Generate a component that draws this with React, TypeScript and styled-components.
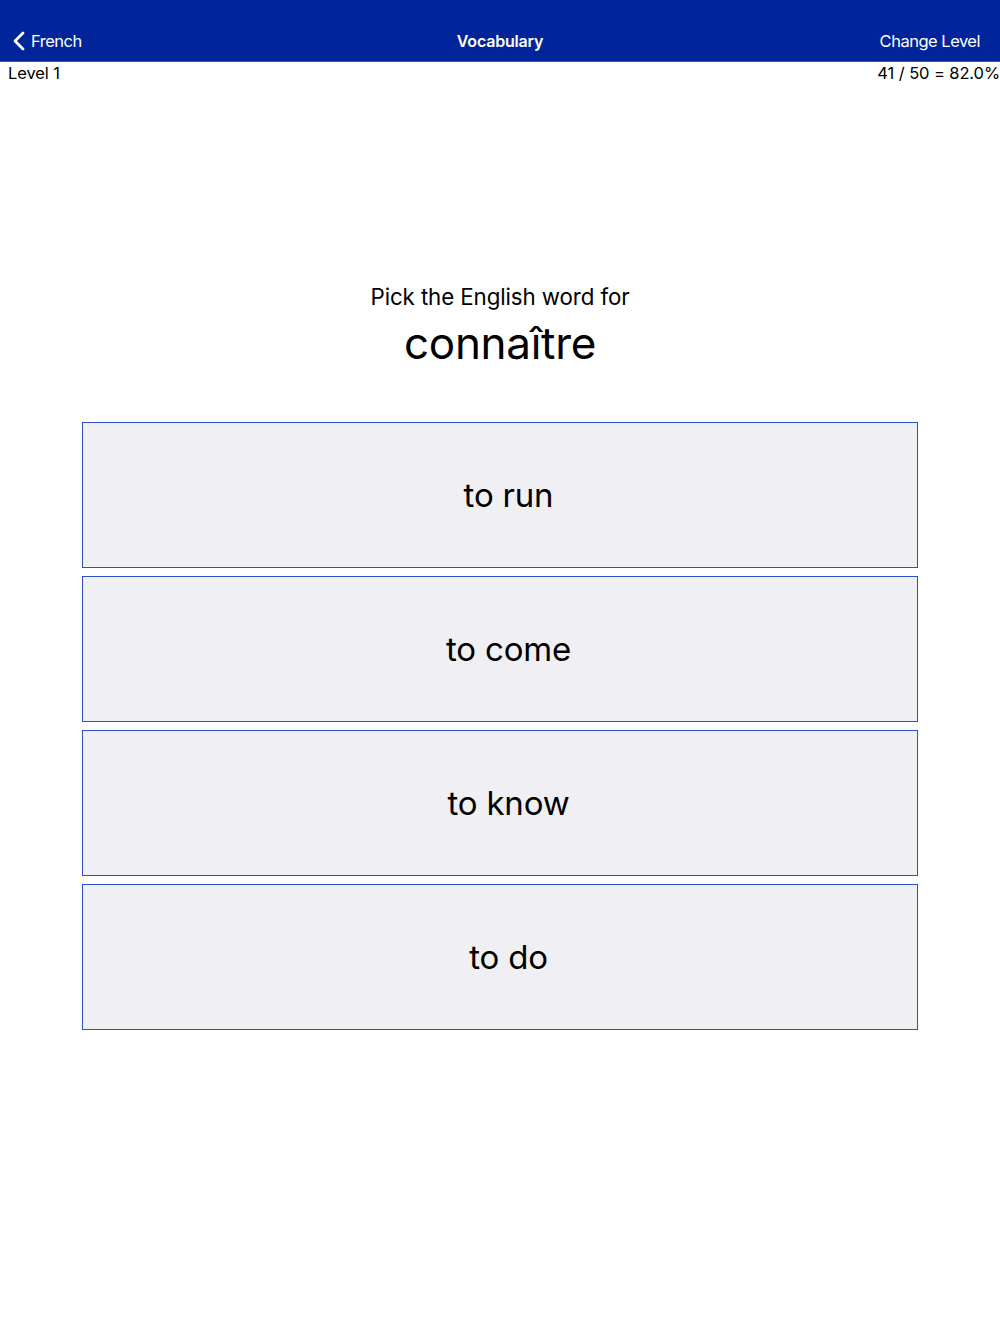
import React from "react";
import styled, { createGlobalStyle } from "styled-components";

const Global = createGlobalStyle`
  html, body { margin: 0; padding: 0; background: #ffffff; }
  body { font-family: Inter, "Liberation Sans", sans-serif; color: #000; }
`;

const Page = styled.div`
  width: 1000px;
  min-height: 1334px;
  background: #fff;
`;

const NavBar = styled.header`
  height: 62px;
  background: #00259a;
  border-bottom: 1px solid #3a55b0;
  box-sizing: border-box;
  display: grid;
  grid-template-columns: 1fr auto 1fr;
  align-items: center;
  padding: 20px 20px 0 20px;
  color: #fff;
  font-size: 16.5px;
`;

const BackButton = styled.div`
  display: flex;
  align-items: center;
  gap: 5px;
  justify-self: start;
  margin-left: -8px;
  letter-spacing: -0.5px;
`;

const Title = styled.div`
  font-weight: 600;
  font-size: 16px;
  letter-spacing: -0.2px;
`;

const RightButton = styled.div`
  justify-self: end;
  letter-spacing: -0.5px;
`;

const StatusRow = styled.div`
  display: flex;
  justify-content: space-between;
  padding: 0 0 0 8px;
  height: 22px;
  font-size: 16.5px;
  line-height: 22px;
  letter-spacing: -0.1px;
`;

const Prompt = styled.div`
  display: flex;
  flex-direction: column;
  align-items: center;
  margin-top: 199px;
`;

const PromptLabel = styled.div`
  font-size: 22.3px;
  line-height: 28px;
  letter-spacing: -0.1px;
`;

const Word = styled.div`
  font-size: 44px;
  line-height: 56px;
  margin-top: 4px;
  letter-spacing: -0.3px;
`;

const Choices = styled.div`
  display: flex;
  flex-direction: column;
  gap: 8px;
  margin: 51px 82px 0 82px;
`;

const Choice = styled.button`
  height: 146px;
  box-sizing: border-box;
  border: 1px solid #2c4fc2;
  background: #efeff4;
  font-family: inherit;
  font-size: 33px;
  color: #000;
  padding: 0 0 0 17px;
  cursor: pointer;
  letter-spacing: -0.2px;
`;

const choices = ["to run", "to come", "to know", "to do"];

export default function App() {
  return (
    <Page>
      <Global />
      <NavBar>
        <BackButton>
          <svg width="14" height="20" viewBox="0 0 14 20">
            <path d="M11 2 L3 10 L11 18" fill="none" stroke="#fff" strokeWidth="2.8" strokeLinecap="round" strokeLinejoin="round" />
          </svg>
          French
        </BackButton>
        <Title>Vocabulary</Title>
        <RightButton>Change Level</RightButton>
      </NavBar>
      <StatusRow>
        <span>Level 1</span>
        <span>41 / 50 = 82.0%</span>
      </StatusRow>
      <Prompt>
        <PromptLabel>Pick the English word for</PromptLabel>
        <Word>connaître</Word>
      </Prompt>
      <Choices>
        {choices.map((c) => (
          <Choice key={c}>{c}</Choice>
        ))}
      </Choices>
    </Page>
  );
}
